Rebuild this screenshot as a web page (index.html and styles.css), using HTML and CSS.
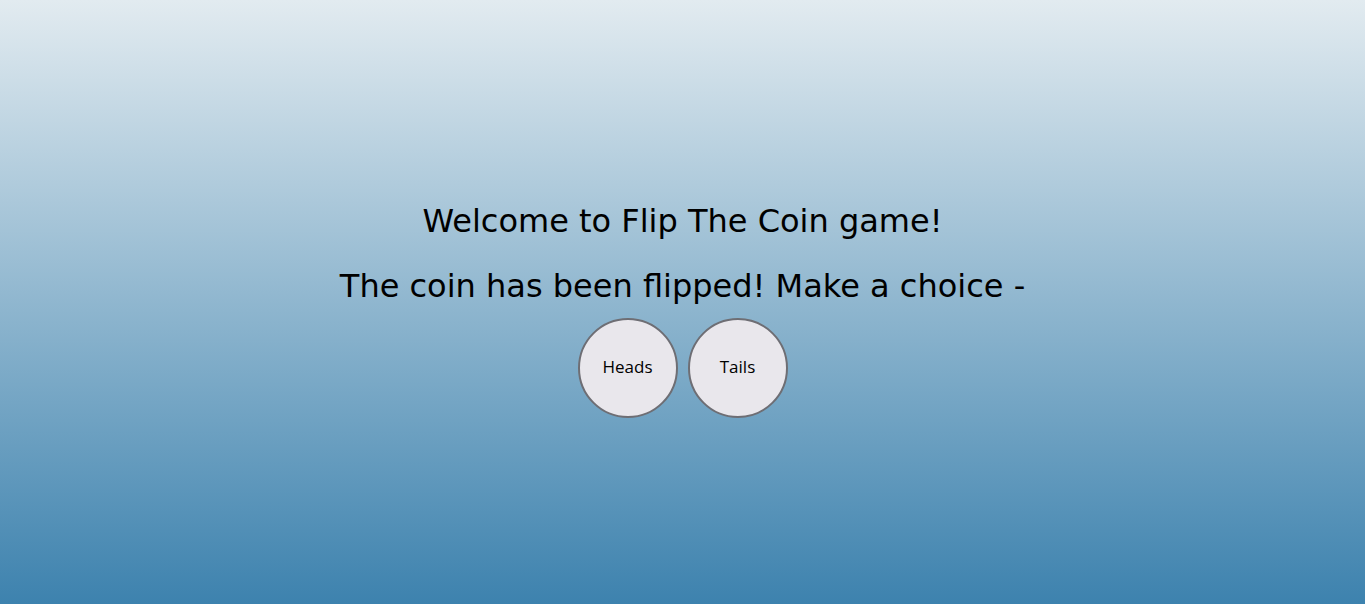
FILE: index.html
```html
<!DOCTYPE html>
<html>
<head>
<meta charset="utf-8">
<title>Flip The Coin</title>
<link rel="stylesheet" href="styles.css">
</head>
<body>
<main class="game">
  <h1 class="title">Welcome to Flip The Coin game!</h1>
  <h2 class="prompt">The coin has been flipped! Make a choice -</h2>
  <div class="choices">
    <button class="coin">Heads</button>
    <button class="coin">Tails</button>
  </div>
</main>
</body>
</html>
```
FILE: styles.css
```css
html, body {
  margin: 0;
  height: 100%;
}
body {
  background: linear-gradient(to bottom, #e2ebf0 0%, #3d82ae 100%);
  font-family: "DejaVu Sans", sans-serif;
  color: #000;
  display: flex;
  align-items: center;
  justify-content: center;
}
.game {
  display: flex;
  flex-direction: column;
  align-items: center;
  padding-top: 15px;
}
.title, .prompt {
  font-weight: normal;
  font-size: 32px;
  margin: 0;
  line-height: 38px;
}
.title { margin-bottom: 27px; }
.prompt { margin-bottom: 13px; }
.choices {
  display: flex;
  gap: 10px;
}
.coin {
  width: 100px;
  height: 100px;
  border-radius: 50%;
  border: 2px solid #6e6e74;
  background: #e9e7ec;
  font-family: "Open Sans", sans-serif;
  font-size: 17px;
  color: #000;
  padding: 0 0 3px;
}
```
